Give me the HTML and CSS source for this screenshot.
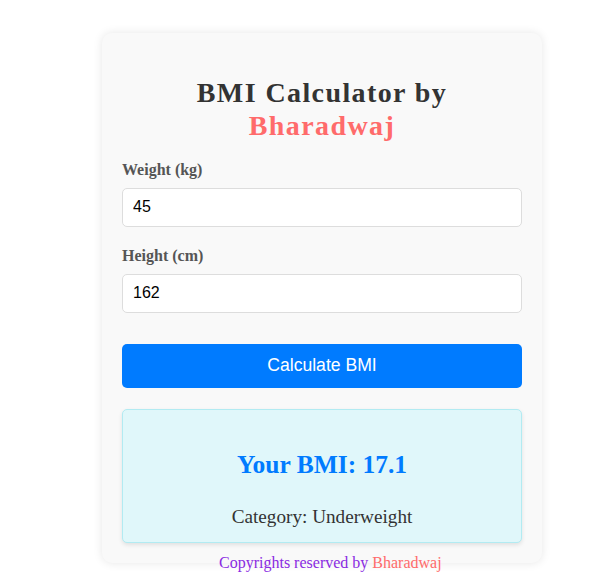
FILE: index.html
```html
<!DOCTYPE html>
<html lang="en">
<head>
<meta charset="utf-8">
<title>BMI Calculator</title>
<link rel="stylesheet" href="styles.css">
</head>
<body>
<div class="card">
  <h1 class="title">BMI Calculator by <span class="accent title-name">Bharadwaj</span></h1>
  <div class="group">
    <label class="label" for="w">Weight (kg)</label>
    <input class="field" id="w" type="text" value="45">
  </div>
  <div class="group">
    <label class="label" for="h">Height (cm)</label>
    <input class="field" id="h" type="text" value="162">
  </div>
  <button class="btn" type="button">Calculate BMI</button>
  <div class="result">
    <h2 class="bmi">Your BMI: 17.1</h2>
    <p class="cat">Category: Underweight</p>
  </div>
</div>
<p class="footer">Copyrights reserved by <span class="accent">Bharadwaj</span></p>
</body>
</html>
```
FILE: styles.css
```css
html, body {
  margin: 0;
  padding: 0;
  background: #ffffff;
}
body {
  font-family: "Liberation Serif", "Times New Roman", serif;
  position: relative;
  height: 583px;
  overflow: hidden;
}
.card {
  box-sizing: border-box;
  width: 440px;
  margin: 33px 0 0 102px;
  padding: 20px;
  background: #f9f9f9;
  border-radius: 10px;
  box-shadow: 0 0 10px rgba(0, 0, 0, 0.1);
}
.title {
  margin: 22.5px 0 18px;
  font-size: 28px;
  line-height: 33.6px;
  letter-spacing: 1.4px;
  text-align: center;
  color: #333333;
  font-weight: bold;
}
.accent {
  color: #ff6b6b;
}
.title-name {
  display: block;
}
.group {
  margin-bottom: 20px;
}
.label {
  display: block;
  font-size: 16px;
  font-weight: bold;
  color: #555555;
  margin-bottom: 9px;
}
.field {
  display: block;
  box-sizing: border-box;
  width: 100%;
  height: 39px;
  padding: 0 10px;
  border: 1px solid #dddddd;
  border-radius: 5px;
  background: #ffffff;
  font-family: "Liberation Sans", Arial, sans-serif;
  font-size: 16px;
  color: #000000;
  outline: none;
}
.btn {
  display: block;
  width: 100%;
  height: 44px;
  margin-top: 31px;
  padding: 0;
  border: none;
  border-radius: 5px;
  background: #007bff;
  color: #ffffff;
  font-family: "Liberation Sans", Arial, sans-serif;
  font-size: 17.6px;
}
.result {
  box-sizing: border-box;
  height: 134px;
  margin-top: 21px;
  padding: 20px 20px 15px;
  background: #e0f7fa;
  border: 1px solid #b2ebf2;
  border-radius: 5px;
  box-shadow: 0 2px 4px rgba(0, 0, 0, 0.1);
  text-align: center;
}
.bmi {
  margin: 20.7px 0 26px;
  font-size: 25.5px;
  font-weight: bold;
  color: #007bff;
}
.cat {
  margin: 0;
  font-size: 19.2px;
  color: #333333;
}
.footer {
  position: absolute;
  top: 554px;
  left: 219px;
  margin: 0;
  font-size: 16px;
  color: #8a2be2;
  white-space: nowrap;
}
```
